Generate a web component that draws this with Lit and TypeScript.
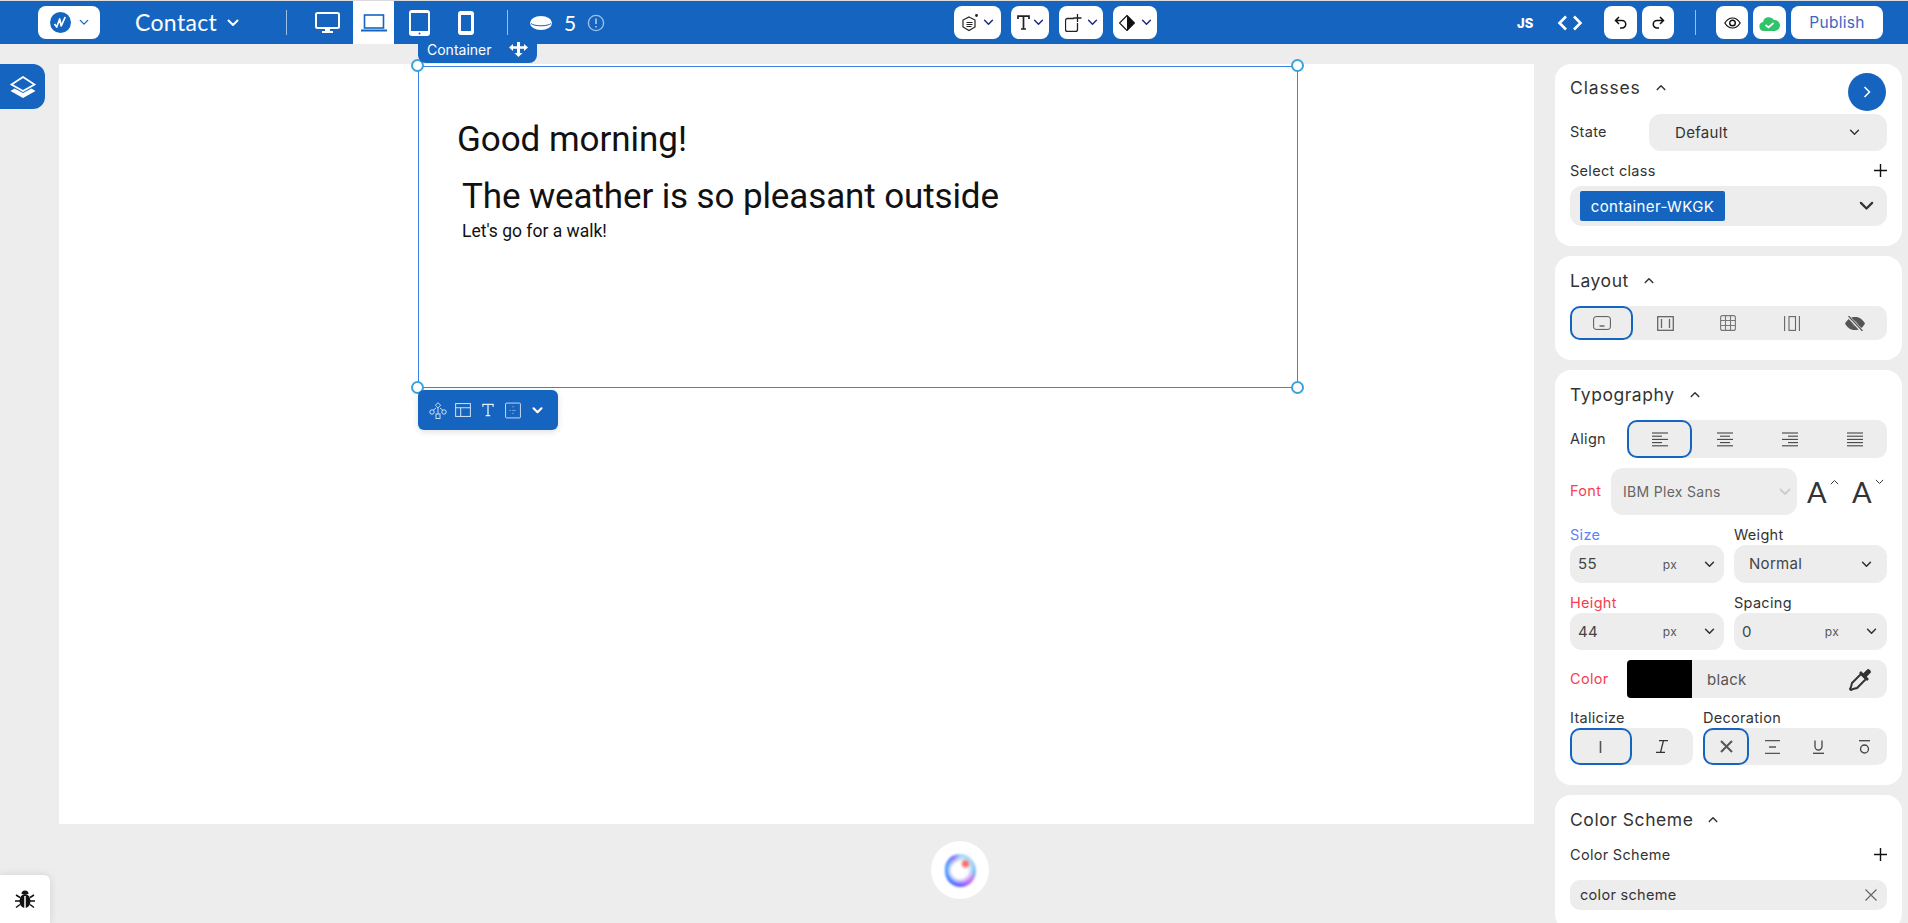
import { LitElement, html, css, svg } from "lit";
import { customElement } from "lit/decorators.js";

const chev = (w = 12, c = "#333", sw = 2, up = false) => html`<svg class="ic" width=${w} height=${Math.round(w * 0.67)} viewBox="0 0 12 8" fill="none" stroke=${c} stroke-width=${sw} stroke-linecap="round" stroke-linejoin="round"><path d=${up ? "M1.5 6.5L6 2l4.5 4.5" : "M1.5 1.5L6 6l4.5-4.5"}/></svg>`;
const plus = html`<svg class="ic" width="13" height="13" viewBox="0 0 13 13" stroke="#111" stroke-width="1.4"><path d="M6.5 0v13M0 6.5h13"/></svg>`;
const lines = (kind: string) => {
  const rows = [16, 10, 16, 10, 16];
  return html`<svg class="ic" width="16" height="15" viewBox="0 0 16 15" stroke="#444" stroke-width="1.1">${rows.map((r, i) => {
    const w = kind === "j" ? 16 : r;
    const x = kind === "l" || kind === "j" ? 0 : kind === "c" ? (16 - w) / 2 : 16 - w;
    return svg`<line x1=${x} x2=${x + w} y1=${1 + i * 3.2} y2=${1 + i * 3.2}></line>`;
  })}</svg>`;
};

@customElement("app-root")
export class AppRoot extends LitElement {
  static styles = css`
    :host { display: block; width: 100%; height: 100vh; overflow: hidden; background: #ededed; font-family: Inter, "Noto Sans", sans-serif; color: #333; position: relative; }
    * { box-sizing: border-box; }
    .ic { display: block; flex: none; }
    .top { height: 44px; background: #1565c0; display: flex; align-items: center; position: relative; border-top: 1px solid #dcdcdc; }
    .btn { height: 33px; background: #fff; border-radius: 8px; display: flex; align-items: center; justify-content: center; gap: 5px; flex: none; }
    .logo { width: 62px; margin-left: 38px; gap: 8px; }
    .page { color: #fff; font-family: Lato, sans-serif; font-size: 23px; margin-left: 35px; width: 92px; letter-spacing: 0.35px; padding-bottom: 2px; }
    .sep { width: 1px; height: 25px; background: #9dbfe6; flex: none; }
    .dev { display: flex; align-items: center; justify-content: center; flex: none; height: 43px; }
    .count { color: #fff; font-size: 21px; width: 23px; margin-left: 12px; font-family: Lato, sans-serif; }
    .mid { display: flex; gap: 10px; margin-left: 349px; }
    .js { color: #fff; font-weight: 800; font-size: 13px; margin-left: 360px; width: 40px; }
    .publish { width: 92px; color: #3b66c4; font-size: 15.5px; letter-spacing: 0.3px; font-weight: 400; }
    .main { display: flex; height: 879px; }
    .stage { width: 1555px; flex: none; padding: 20px 21px 0 59px; }
    .canvas { width: 1475px; height: 760px; background: #fff; position: relative; }
    .sel { position: absolute; left: 359px; top: 2px; width: 880px; height: 322px; border: 1px solid #3b82e6; color: #111; font-family: Roboto, sans-serif; }
    .h1 { font-size: 35px; line-height: 44px; margin: 51px 0 0 38px; letter-spacing: -0.05px; }
    .h2 { font-size: 35px; line-height: 44px; margin: 13px 0 0 43px; letter-spacing: -0.12px; }
    .p { font-size: 17.5px; line-height: 20px; margin: 2px 0 0 43px; }
    .hd { position: absolute; width: 13px; height: 13px; border-radius: 50%; background: #fff; border: 2px solid #3aa3dc; }
    .tag { position: absolute; left: 359px; top: -20px; width: 119px; height: 19px; background: #1565c0; border-radius: 0 0 8px 8px; color: #fff; font-size: 14px; display: flex; align-items: center; padding: 0 0 9px 9px; gap: 17px; }
    .tools { position: absolute; left: 359px; top: 326px; width: 140px; height: 40px; background: #1565c0; border-radius: 6px; display: flex; align-items: center; padding-left: 11px; gap: 11px; box-shadow: 0 2px 6px rgba(0,0,0,.12); }
    .tools .tree { margin-right: -3px; }
    .layers { position: absolute; left: 0; top: 64px; width: 45px; height: 45px; background: #1565c0; border-radius: 0 12px 12px 0; display: flex; align-items: center; justify-content: center; }
    .ai { position: absolute; left: 931px; top: 841px; width: 58px; height: 58px; border-radius: 50%; background: #fff; display: flex; align-items: center; justify-content: center; }
    .blob { width: 31px; height: 33px; border-radius: 48% 52% 50% 50%; background: radial-gradient(circle at 66% 30%, #f66 0 7%, rgba(255,102,102,0) 16%), radial-gradient(circle at 47% 50%, #fff 0 34%, rgba(255,255,255,0) 62%), conic-gradient(#a8d8f8 0 12%, #7fc4f2 25%, #c86bf5 38%, #6a5cff 50%, #2a6cff 65%, #2f8cff 80%, #7a6cff 92%, #a8d8f8); filter: blur(1px); }
    .bug { position: absolute; left: 0; top: 875px; width: 50px; height: 48px; background: #fff; border-radius: 0 6px 0 0; box-shadow: 0 0 8px rgba(0,0,0,.12); display: flex; align-items: center; justify-content: center; }
    .side { width: 347px; flex: none; padding-top: 20px; display: flex; flex-direction: column; gap: 10px; }
    .card { background: #fff; border-radius: 16px; padding: 15px 15px 20px; position: relative; font-size: 14px; flex: none; }
    .card.first { padding-top: 14px; }
    .title { height: 20px; display: flex; align-items: center; gap: 15px; font-size: 17.5px; color: #333; letter-spacing: .55px; padding-bottom: 2px; }
    .title.wide { letter-spacing: .85px; }
    .row { display: flex; align-items: center; }
    .lab { height: 20px; display: flex; align-items: center; justify-content: space-between; font-size: 14.5px; letter-spacing: .3px; padding-bottom: 2px; }
    .next { position: absolute; right: 16px; top: 9px; width: 38px; height: 38px; border-radius: 50%; background: #1565c0; display: flex; align-items: center; justify-content: center; }
    .fld { background: #ededed; border-radius: 12px; display: flex; align-items: center; font-size: 14.5px; letter-spacing: .3px; }
    .state { width: 238px; height: 37px; margin-left: 79px; padding: 0 27px 0 26px; justify-content: space-between; font-size: 15px; }
    .cls { height: 40px; padding: 0 13px 0 10px; justify-content: space-between; }
    .chip { background: #1565c0; color: #fff; border-radius: 2px; width: 145px; height: 30px; display: flex; align-items: center; justify-content: center; font-size: 15px; letter-spacing: .4px; }
    .seg { background: #ededed; border-radius: 10px; display: grid; grid-auto-flow: column; grid-auto-columns: 1fr; }
    .seg > div { display: flex; align-items: center; justify-content: center; border-radius: 10px; }
    .seg > .on { border: 2px solid #1565c0; }
    .two { display: grid; grid-template-columns: 154px 153px; column-gap: 10px; }
    .num { height: 38px; padding: 0 9px 0 8px; }
    .num .v { flex: 1; font-size: 15px; color: #444; padding-bottom: 1px; }
    .num .u { font-size: 12px; color: #555; margin-right: 27px; }
    .red { color: #f5404f; }
    .font { height: 47px; width: 186px; margin-left: 41px; padding: 0 6px 0 12px; justify-content: space-between; color: #666; font-size: 14px; }
    .aa { font-size: 29px; color: #333; display: flex; align-items: flex-start; font-family: Lato, sans-serif; line-height: 32px; margin-left: 10px; width: 35px; gap: 3px; }
    .aa .ic { margin-top: 3px; }
    .color { height: 38px; flex: 1; padding-right: 15px; border-radius: 4px 10px 10px 4px; justify-content: space-between; color: #555; font-size: 15px; }
    .sw { width: 65px; height: 38px; background: #000; border-radius: 4px 0 0 4px; margin-right: 15px; }
    .scheme { height: 30px; border-radius: 10px; padding: 0 10px 1px; justify-content: space-between; }
    .dec { display: grid; grid-template-columns: 123px 184px; column-gap: 10px; }
  `;

  render() {
    const wbChev = chev(11, "#1a237e", 1.6);
    return html`
      <div class="top">
        <div class="btn logo">
          <svg class="ic" width="21" height="21" viewBox="0 0 21 21"><circle cx="10.5" cy="10.5" r="10.5" fill="#1565c0"/><path d="M4.5 12l2.2 3 3-8 1.5 7 4-9" fill="none" stroke="#fff" stroke-width="1.7" stroke-linejoin="round"/></svg>
          ${chev(10, "#1565c0", 1.5)}
        </div>
        <div class="page">Contact</div>
        ${chev(12, "#fff", 2)}
        <div class="sep" style="margin-left:47px"></div>
        <div class="dev" style="width:66px;padding-left:14px">
          <svg class="ic" width="25" height="22" viewBox="0 0 25 22"><rect x="1" y="1" width="23" height="15" rx="1.5" fill="none" stroke="#fff" stroke-width="2"/><path d="M10 17h5v2h3v2H7v-2h3z" fill="#fff"/></svg>
        </div>
        <div class="dev" style="width:41px;background:#fff">
          <svg class="ic" width="26" height="18" viewBox="0 0 26 18" fill="none" stroke="#1565c0"><rect x="3.5" y="1" width="19" height="13" stroke-width="1.6"/><path d="M0 16.5h26" stroke-width="2"/></svg>
        </div>
        <div class="dev" style="width:50px">
          <svg class="ic" width="21" height="26" viewBox="0 0 21 26"><rect width="21" height="26" rx="3" fill="#fff"/><rect x="2" y="3" width="17" height="18" fill="#1565c0"/><circle cx="10.5" cy="23.5" r="1" fill="#1565c0"/></svg>
        </div>
        <div class="dev" style="width:44px">
          <svg class="ic" width="16" height="24" viewBox="0 0 16 24"><rect width="16" height="24" rx="3" fill="#fff"/><rect x="3" y="4" width="10" height="16" fill="#1565c0"/></svg>
        </div>
        <div class="sep" style="margin-left:19px"></div>
        <svg class="ic" style="margin-left:22px" width="22" height="14" viewBox="0 0 22 14"><ellipse cx="11" cy="7" rx="11" ry="7" fill="#fff"/><path d="M1 7.5c3 3 17 3 20 0" fill="none" stroke="#1565c0" stroke-width="1"/></svg>
        <div class="count">5</div>
        <svg class="ic" width="18" height="18" viewBox="0 0 18 18" fill="none" stroke="#9dbfe6" stroke-width="1.4"><circle cx="9" cy="9" r="7.6"/><path d="M9 4.5v5.5M9 12v1.5" stroke-width="1.8"/></svg>
        <div class="mid">
          <div class="btn" style="width:47px">
            <svg class="ic" width="16" height="18" viewBox="0 0 16 18" fill="none" stroke="#222" stroke-width="1.2"><path d="M7 3l6 3v7l-6 3.5-6-3.5V6z"/><path d="M4.5 8.5h6M4.5 10.5h6M4.5 12.5h5" stroke-width="1"/><circle cx="14.5" cy="1.5" r=".8" fill="#222"/></svg>
            ${wbChev}
          </div>
          <div class="btn" style="width:38px;gap:3px">
            <svg class="ic" width="13" height="15" viewBox="0 0 13 15" fill="none" stroke="#222" stroke-width="1.7"><path d="M1 4V1.2h11V4M6.5 1.2V14M4 14h5"/></svg>
            ${wbChev}
          </div>
          <div class="btn" style="width:44px">
            <svg class="ic" width="17" height="18" viewBox="0 0 17 18" fill="none" stroke="#222" stroke-width="1.3"><path d="M9 4.5H2.5a2 2 0 0 0-2 2v9a2 2 0 0 0 2 2h8a2 2 0 0 0 2-2V9"/><path d="M12.5 0v8M8.5 4h8"/></svg>
            ${wbChev}
          </div>
          <div class="btn" style="width:44px;gap:6px">
            <svg class="ic" width="16" height="16" viewBox="0 0 16 16"><path d="M8 .5L15.5 8 8 15.5.5 8z" fill="none" stroke="#111" stroke-width="1.2"/><path d="M8 .5L15.5 8 8 15.5z" fill="#111"/></svg>
            ${wbChev}
          </div>
        </div>
        <div class="js">JS</div>
        <svg class="ic" width="26" height="16" viewBox="0 0 26 16" fill="none" stroke="#fff" stroke-width="2.6"><path d="M9 1.5L2.5 8 9 14.5M17 1.5L23.5 8 17 14.5"/></svg>
        <div class="btn" style="width:33px;margin-left:21px">
          <svg class="ic" width="13" height="13" viewBox="0 0 13 13" fill="none" stroke="#111" stroke-width="1.5"><path d="M5 1L1.5 4.500 5 8M1.500 4.500H8a3.500 3.500 0 0 1 0 7.500H6"/></svg>
        </div>
        <div class="btn" style="width:32px;margin-left:5px">
          <svg class="ic" width="13" height="13" viewBox="0 0 13 13" fill="none" stroke="#111" stroke-width="1.5"><path d="M8 1l3.500 3.500L8 8M11.500 4.500H5a3.500 3.500 0 0 0 0 7.500h2"/></svg>
        </div>
        <div class="sep" style="margin-left:21px"></div>
        <div class="btn" style="width:32px;margin-left:20px">
          <svg class="ic" width="17" height="12" viewBox="0 0 17 12" fill="none" stroke="#111" stroke-width="1.2"><path d="M.8 6C3 2.500 5.500 1 8.500 1s5.500 1.500 7.700 5c-2.200 3.500-4.700 5-7.700 5S3 9.500.8 6z"/><circle cx="8.500" cy="6" r="2.800" stroke-width="1.400"/></svg>
        </div>
        <div class="btn" style="width:33px;margin-left:5px">
          <svg class="ic" width="21" height="16" viewBox="0 0 21 16"><path d="M5 16a4.500 4.500 0 0 1-1-8.900A6 6 0 0 1 15 5a5.500 5.500 0 0 1 1 11z" fill="#2fc46a"/><path d="M6.500 10l3 2.500L14.500 8" fill="none" stroke="#fff" stroke-width="1.700"/></svg>
        </div>
        <div class="btn publish" style="margin-left:5px">Publish</div>
      </div>

      <div class="main">
        <div class="stage">
          <div class="canvas">
            <div class="sel">
              <div class="h1">Good morning!</div>
              <div class="h2">The weather is so pleasant outside</div>
              <div class="p">Let's go for a walk!</div>
              <div class="hd" style="left:-8px;top:-8px"></div>
              <div class="hd" style="right:-7px;top:-8px"></div>
              <div class="hd" style="left:-8px;bottom:-7px"></div>
              <div class="hd" style="right:-7px;bottom:-7px"></div>
            </div>
            <div class="tag">Container
              <svg class="ic" width="19" height="15" viewBox="0 0 19 15" fill="#fff"><path d="M0 5.500L4 2v2.300h4V0h3v4.300h4V2l4 3.500L15 9V6.800h-4V11h2.500L9.500 15l-4-4H8V6.800H4V9z"/></svg>
            </div>
            <div class="tools">
              <svg class="ic tree" width="18" height="17" viewBox="0 0 18 17" fill="none" stroke="#cfe0f5" stroke-width="1"><path d="M9 .7l2.600 2.600L9 5.900 6.400 3.300z"/><circle cx="3" cy="10" r="2.200"/><circle cx="15" cy="10" r="2.200"/><rect x="7" y="12" width="4" height="4.500"/><path d="M9 6v6M7 6L4 8.500M11 6l3 2.500"/></svg>
              <svg class="ic" width="16" height="14" viewBox="0 0 17 15" fill="none" stroke="#cfe0f5" stroke-width="1.100"><rect x=".6" y=".6" width="15.800" height="13.800"/><path d="M.6 5h15.800M6 5v9.400"/></svg>
              <svg class="ic" width="12" height="14" viewBox="0 0 13 14" fill="none" stroke="#e6eefa" stroke-width="1.400"><path d="M1 3.500V1h11v2.500M6.500 1v12M4 13h5"/></svg>
              <svg class="ic" width="16" height="17" viewBox="0 0 17 17" fill="none" stroke="#cfe0f5" stroke-width="1"><rect x=".6" y=".6" width="15.800" height="15.800" rx="1"/><path d="M8.500 4v2M8.500 8v1M8.500 11v2M5 8.500h2M10 8.500h2" stroke-dasharray="1 1"/></svg>
              ${chev(11, "#fff", 2.4)}
            </div>
          </div>
        </div>
        <div class="side">
          <div class="card first">
            <div class="title wide">Classes ${chev(10, "#333", 1.8, true)}</div>
            <div class="next"><svg class="ic" width="8" height="12" viewBox="0 0 8 12" fill="none" stroke="#fff" stroke-width="1.500"><path d="M1.500 1l5 5-5 5"/></svg></div>
            <div class="row" style="margin-top:16px;position:relative">
              <div class="lab" style="position:absolute;left:0">State</div>
              <div class="fld state">Default ${chev(11, "#333", 1.6)}</div>
            </div>
            <div class="lab" style="margin-top:10px">Select class ${plus}</div>
            <div class="fld cls" style="margin-top:5px"><div class="chip">container-WKGK</div>${chev(15, "#333", 1.8)}</div>
          </div>

          <div class="card">
            <div class="title">Layout ${chev(10, "#333", 1.8, true)}</div>
            <div class="seg" style="height:34px;margin-top:15px">
              <div class="on"><svg class="ic" width="18" height="14" viewBox="0 0 18 14" fill="none" stroke="#555" stroke-width="1"><rect x=".6" y=".6" width="16.800" height="12.800" rx="2.500"/><path d="M6.500 10h5" stroke-width="1.300"/></svg></div>
              <div><svg class="ic" width="17" height="15" viewBox="0 0 17 15" fill="none" stroke="#666" stroke-width="1.300"><rect x=".7" y=".7" width="15.600" height="13.600"/><path d="M4.500 3v9M12.500 3v9"/></svg></div>
              <div><svg class="ic" width="16" height="16" viewBox="0 0 16 16" fill="none" stroke="#777" stroke-width="1.100"><rect x=".6" y=".6" width="14.800" height="14.800" rx="2"/><path d="M5.500 .6v14.800M10.500 .6v14.800M.6 5.500h14.800M.6 10.500h14.800"/></svg></div>
              <div><svg class="ic" width="16" height="15" viewBox="0 0 16 15" fill="none" stroke="#666" stroke-width="1.100"><path d="M.6 0v15M15.400 0v15"/><rect x="5" y=".6" width="6.500" height="13.800"/></svg></div>
              <div><svg class="ic" width="20" height="15" viewBox="0 0 20 15"><path d="M0 7.500C3 2.500 6 1 10 1s7 1.500 10 6.500C17 12.500 14 14 10 14S3 12.500 0 7.500z" fill="#555"/><circle cx="10" cy="7.500" r="2.500" fill="#777"/><path d="M3 0l14 15" stroke="#ededed" stroke-width="3"/><path d="M3.500 0l14 15" stroke="#555" stroke-width="1.200"/></svg></div>
            </div>
          </div>

          <div class="card">
            <div class="title">Typography ${chev(10, "#333", 1.8, true)}</div>
            <div class="row" style="margin-top:15px">
              <div class="lab" style="width:57px">Align</div>
              <div class="seg" style="height:38px;flex:1">
                <div class="on">${lines("l")}</div><div>${lines("c")}</div><div>${lines("r")}</div><div>${lines("j")}</div>
              </div>
            </div>
            <div class="row" style="margin-top:10px;position:relative">
              <div class="lab red" style="position:absolute;left:0">Font</div>
              <div class="fld font">IBM Plex Sans ${chev(12, "#ccc", 1.8)}</div>
              <div class="aa">A${chev(9, "#333", 1.3, true)}</div>
              <div class="aa">A${chev(9, "#333", 1.3)}</div>
            </div>
            <div class="two" style="margin-top:10px">
              <div class="lab" style="color:#5b84f5">Size</div>
              <div class="lab">Weight</div>
              <div class="fld num"><span class="v">55</span><span class="u">px</span>${chev(11, "#333", 1.8)}</div>
              <div class="fld num" style="padding:0 15px"><span class="v">Normal</span>${chev(11, "#333", 1.8)}</div>
            </div>
            <div class="two" style="margin-top:10px">
              <div class="lab red">Height</div>
              <div class="lab">Spacing</div>
              <div class="fld num" style="height:37px"><span class="v">44</span><span class="u">px</span>${chev(11, "#333", 1.8)}</div>
              <div class="fld num" style="height:37px;padding-right:10px"><span class="v">0</span><span class="u">px</span>${chev(11, "#333", 1.8)}</div>
            </div>
            <div class="row" style="margin-top:10px">
              <div class="lab red" style="width:57px">Color</div>
              <div class="fld color"><div class="sw"></div><span style="flex:1">black</span>
                <svg class="ic" width="23" height="23" viewBox="0 0 23 23" fill="none" stroke="#333" stroke-width="2"><path d="M12 6L3 15l-1 4-1 2 1 1 2-1 4-1 9-9z"/><path d="M11 4l8 8" stroke-width="2.600"/><path d="M14 7l5-5a2.500 2.500 0 0 1 2 2l-5 5z" fill="#333"/></svg>
              </div>
            </div>
            <div class="dec" style="margin-top:10px">
              <div class="lab">Italicize</div>
              <div class="lab">Decoration</div>
              <div class="seg" style="height:37px">
                <div class="on"><svg class="ic" width="3" height="12" viewBox="0 0 3 12"><rect x=".7" width="1.600" height="12" fill="#555"/></svg></div>
                <div><svg class="ic" width="12" height="13" viewBox="0 0 12 13" fill="none" stroke="#333" stroke-width="1.300"><path d="M3 .7h9M0 12.300h9M7.500 .7l-3 11.600"/></svg></div>
              </div>
              <div class="seg" style="height:37px">
                <div class="on"><svg class="ic" width="13" height="13" viewBox="0 0 13 13" stroke="#555" stroke-width="2"><path d="M1 1l11 11M12 1L1 12"/></svg></div>
                <div><svg class="ic" width="15" height="14" viewBox="0 0 15 14" stroke="#555" stroke-width="1.300"><path d="M0 .7h15M4 7h7M0 13.300h15"/></svg></div>
                <div><svg class="ic" width="11" height="14" viewBox="0 0 11 14" fill="none" stroke="#444" stroke-width="1.300"><path d="M2 .5v6a3.500 3.500 0 0 0 7 0v-6"/><path d="M0 13.300h11"/></svg></div>
                <div><svg class="ic" width="11" height="14" viewBox="0 0 11 14" fill="none" stroke="#444" stroke-width="1.300"><path d="M0 .7h11"/><circle cx="5.500" cy="9" r="4"/></svg></div>
              </div>
            </div>
          </div>

          <div class="card">
            <div class="title">Color Scheme ${chev(10, "#333", 1.8, true)}</div>
            <div class="lab" style="margin-top:15px">Color Scheme ${plus}</div>
            <div class="fld scheme" style="margin-top:15px">color scheme
              <svg class="ic" width="12" height="12" viewBox="0 0 12 12" stroke="#666" stroke-width="1.200"><path d="M.5 .5l11 11M11.500 .5l-11 11"/></svg>
            </div>
          </div>
        </div>
      </div>

      <div class="layers">
        <svg class="ic" width="26" height="22" viewBox="0 0 26 22"><path d="M13 1L24.500 8.500 13 15 1.500 8.500z" fill="none" stroke="#fff" stroke-width="1.800"/><path d="M4.500 12.500L13 17l8.500-4.500 4 2.500L13 22 .5 15z" fill="#fff"/></svg>
      </div>
      <div class="ai"><div class="blob"></div></div>
      <div class="bug">
        <svg class="ic" width="20" height="20" viewBox="0 0 20 20" fill="#111" stroke="#111"><ellipse cx="10" cy="12" rx="5.500" ry="7" stroke="none"/><path d="M6.500 5a3.500 3.500 0 0 1 7 0z" stroke="none"/><path d="M1 6l4 2.500M19 6l-4 2.500M0 12h5M20 12h-5M1 18.500l4-3M19 18.500l-4-3" stroke-width="1.500" fill="none"/><path d="M10 7v12" stroke="#fff" stroke-width="1.500"/></svg>
      </div>
    `;
  }
}
